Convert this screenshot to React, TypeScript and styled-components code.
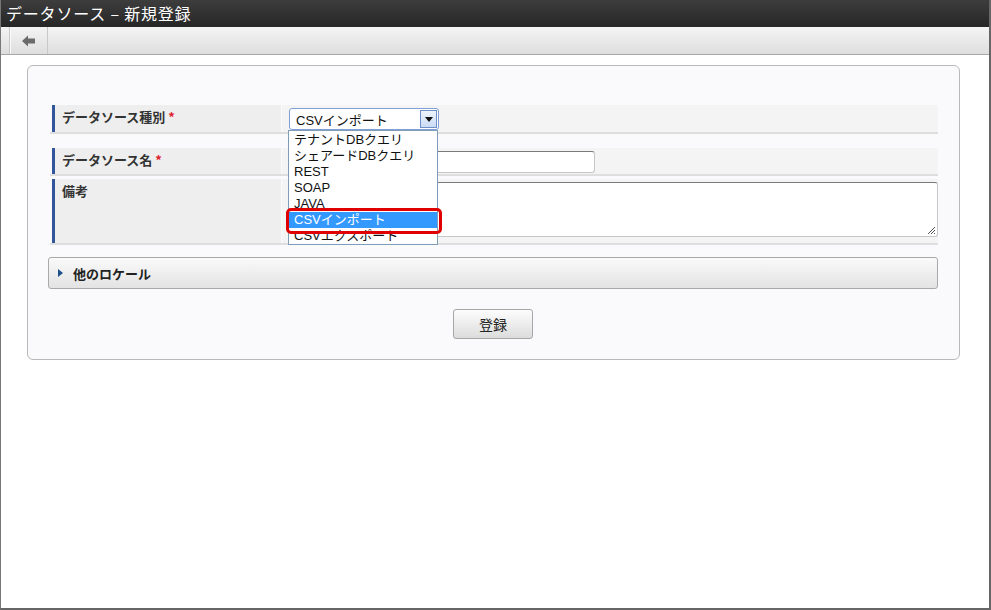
import React from 'react';
import styled, { createGlobalStyle } from 'styled-components';

const GlobalStyle = createGlobalStyle`
  html, body {
    margin: 0;
    padding: 0;
    background: #ffffff;
  }
  body {
    font-family: "Liberation Sans", "Noto Sans CJK JP", Arial, sans-serif;
    font-size: 13px;
    color: #333;
  }
  * { box-sizing: border-box; }
`;

const Frame = styled.div`
  width: 991px;
  height: 610px;
  background: #fff;
  border-left: 1px solid #777;
  border-right: 2px solid #666;
  border-bottom: 2px solid #666;
  display: flex;
  flex-direction: column;
  overflow: hidden;
`;

const TitleBar = styled.div`
  height: 27px;
  flex: none;
  margin-left: -1px;
  margin-right: -2px;
  background: linear-gradient(#3d3d3d, #262626);
  color: #fff;
  font-family: "Noto Sans CJK JP", sans-serif;
  font-size: 16px;
  line-height: 26px;
  padding-left: 6px;
  letter-spacing: 0.8px;
`;

const Toolbar = styled.div`
  height: 28px;
  flex: none;
  background: linear-gradient(#f4f4f4, #dedede);
  border-bottom: 1px solid #a8a8a8;
  display: flex;
  padding-left: 8px;
`;

const ToolButton = styled.div`
  width: 39px;
  height: 100%;
  border-left: 1px solid #c8c8c8;
  border-right: 1px solid #c8c8c8;
  box-shadow: inset 1px 0 0 #fafafa;
  display: flex;
  align-items: center;
  justify-content: center;
`;

const Content = styled.div`
  padding: 10px 29px 0 26px;
`;

const Panel = styled.div`
  background: #fafafc;
  border: 1px solid #b9b9b9;
  border-radius: 6px;
  padding: 39px 21px 20px 20px;
`;

const Row = styled.div<{ $gap: number; $height: number }>`
  display: grid;
  grid-template-columns: 232px 1fr;
  margin-top: ${(p) => p.$gap}px;
  margin-left: 2px;
  border-bottom: 2px solid #dedede;
  min-height: ${(p) => p.$height}px;
`;

const Label = styled.div`
  background: #eeeeee;
  border-left: 3px solid #32569a;
  margin-left: 2px;
  padding: 2px 0 0 7px;
  font-family: "Noto Sans CJK JP", sans-serif;
  font-weight: 700;
  font-size: 13px;
  color: #333;
  margin-right: 1px;
`;

const Required = styled.span`
  color: #e0202a;
  margin-left: 3px;
`;

const Value = styled.div`
  background: #f4f4f4;
  position: relative;
  padding: 3px 0 0 7px;
`;

const SelectBox = styled.div`
  width: 150px;
  height: 22px;
  border: 1px solid #7f9fd6;
  border-radius: 3px;
  background: #fff;
  display: flex;
  align-items: center;
  padding-left: 6px;
  font-size: 13px;
  color: #111;
  justify-content: space-between;
  padding-right: 1px;
`;

const SelectArrow = styled.div`
  width: 17px;
  height: 18px;
  border: 1px solid #6e8fc7;
  background: linear-gradient(#eef4fc, #c9dbf4);
  display: flex;
  align-items: center;
  justify-content: center;
`;

const DropList = styled.div`
  position: absolute;
  left: 6px;
  top: 25px;
  width: 150px;
  height: 115px;
  overflow: hidden;
  background: #fff;
  border: 1px solid #7f9db9;
  z-index: 5;
  padding-top: 1px;
`;

const Option = styled.div<{ $active?: boolean }>`
  height: 16px;
  line-height: 16px;
  padding-left: 5px;
  font-size: 13px;
  white-space: nowrap;
  color: ${(p) => (p.$active ? '#fff' : '#111')};
  background: ${(p) => (p.$active ? '#3399ff' : 'transparent')};
`;

const Highlight = styled.div`
  position: absolute;
  left: 4px;
  top: 103px;
  width: 156px;
  height: 26px;
  border: 3px solid #e00000;
  border-radius: 5px;
  z-index: 6;
`;

const TextInput = styled.div`
  width: 306px;
  height: 22px;
  background: #fff;
  border: 1px solid #c6c6c6;
  border-top-color: #7a7a7a;
  border-radius: 3px;
`;

const TextArea = styled.div`
  height: 55px;
  background: #fff;
  border: 1px solid #c6c6c6;
  border-top-color: #7a7a7a;
  border-radius: 3px;
  position: relative;
`;

const Grip = styled.svg`
  position: absolute;
  right: 1px;
  bottom: 1px;
`;

const Accordion = styled.div`
  margin-top: 12px;
  height: 32px;
  border: 1px solid #a9a9a9;
  border-radius: 3px;
  background: linear-gradient(#fafafa, #e3e3e3);
  display: flex;
  align-items: center;
  padding-left: 9px;
  gap: 10px;
  font-family: "Noto Sans CJK JP", sans-serif;
  font-weight: 700;
  font-size: 13px;
  color: #222;
`;

const Actions = styled.div`
  margin-top: 20px;
  display: flex;
  justify-content: center;
`;

const Button = styled.button`
  width: 80px;
  height: 30px;
  border: 1px solid #a6a6a6;
  border-radius: 3px;
  background: linear-gradient(#fdfdfd, #dcdcdc);
  font-family: "Noto Sans CJK JP", sans-serif;
  font-size: 14px;
  color: #222;
  padding: 0;
`;

const options = [
  'テナントDBクエリ',
  'シェアードDBクエリ',
  'REST',
  'SOAP',
  'JAVA',
  'CSVインポート',
  'CSVエクスポート',
];

export default function App() {
  return (
    <>
      <GlobalStyle />
      <Frame>
        <TitleBar>データソース – 新規登録</TitleBar>
        <Toolbar>
          <ToolButton>
            <svg width="14" height="12" viewBox="0 0 14 12">
              <path d="M0 6 L6 0.5 L6 3.5 L13 3.5 L13 8.5 L6 8.5 L6 11.5 Z" fill="#6a6a6a" />
            </svg>
          </ToolButton>
        </Toolbar>
        <Content>
          <Panel>
            <Row $gap={0} $height={29}>
              <Label>
                データソース種別<Required>*</Required>
              </Label>
              <Value>
                <SelectBox>
                  <span>CSVインポート</span>
                  <SelectArrow>
                    <svg width="8" height="5" viewBox="0 0 8 5">
                      <path d="M0 0 L8 0 L4 5 Z" fill="#111" />
                    </svg>
                  </SelectArrow>
                </SelectBox>
                <DropList>
                  {options.map((o) => (
                    <Option key={o} $active={o === 'CSVインポート'}>
                      {o}
                    </Option>
                  ))}
                </DropList>
                <Highlight />
              </Value>
            </Row>
            <Row $gap={14} $height={28}>
              <Label>
                データソース名<Required>*</Required>
              </Label>
              <Value>
                <TextInput />
              </Value>
            </Row>
            <Row $gap={3} $height={66}>
              <Label>備考</Label>
              <Value>
                <TextArea>
                  <Grip width="10" height="10" viewBox="0 0 10 10">
                    <path d="M9 2 L2 9 M9 5 L5 9 M9 8 L8 9" stroke="#555" strokeWidth="1" />
                  </Grip>
                </TextArea>
              </Value>
            </Row>
            <Accordion>
              <svg width="5" height="8" viewBox="0 0 5 8">
                <path d="M0 0 L5 4 L0 8 Z" fill="#1d4f8a" />
              </svg>
              <span>他のロケール</span>
            </Accordion>
            <Actions>
              <Button>登録</Button>
            </Actions>
          </Panel>
        </Content>
      </Frame>
    </>
  );
}
